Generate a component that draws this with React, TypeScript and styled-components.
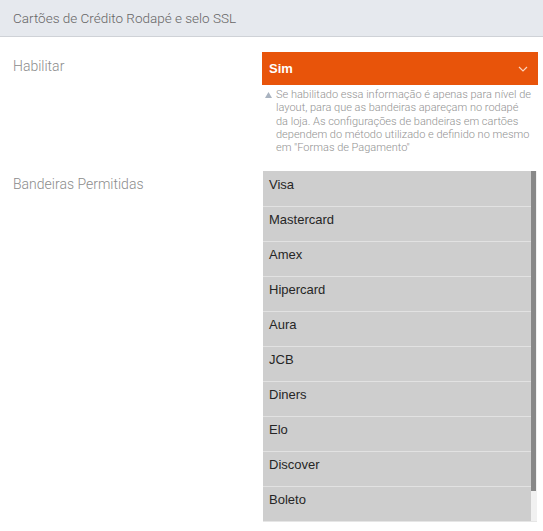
import React from 'react';
import styled, { createGlobalStyle } from 'styled-components';

const GlobalStyle = createGlobalStyle`
  body {
    margin: 0;
    background: #fff;
    font-family: Roboto, 'Liberation Sans', Arial, sans-serif;
  }
`;

const Panel = styled.div`
  width: 543px;
`;

const Header = styled.div`
  height: 36px;
  display: flex;
  align-items: center;
  padding-left: 13px;
  background: #e6e9ee;
  border-bottom: 1px solid #cfd2d7;
  color: #666;
  font-size: 13.5px;
  font-weight: 300;
`;

const Body = styled.div`
  padding-top: 15px;
  display: flex;
  flex-direction: column;
  gap: 17px;
`;

const FieldRow = styled.div`
  display: grid;
  grid-template-columns: 262px 276px;
`;

const Label = styled.div<{ $top: number }>`
  padding-left: 13px;
  padding-top: ${(p) => p.$top}px;
  color: #8c8c8c;
  font-size: 14px;
  font-weight: 300;
  line-height: 16px;
`;

const Select = styled.div`
  height: 33px;
  background: #e8540a;
  display: flex;
  align-items: center;
  justify-content: space-between;
  padding: 0 10px 0 7px;
  color: #fff;
  font-family: 'Liberation Sans', Arial, sans-serif;
  font-size: 13px;
  font-weight: bold;
`;

const Help = styled.div`
  display: flex;
  gap: 4px;
  padding: 3px 0 0 3px;
  color: #929292;
  font-size: 11px;
  font-weight: 300;
  line-height: 13.3px;
`;

const HelpText = styled.p`
  margin: 0;
  width: 255.5px;
`;

const List = styled.div`
  display: flex;
  margin-left: 1px;
  width: 274px;
  border-bottom: 1px solid #e6e6e6;
`;

const Options = styled.div`
  flex: 1;
  display: flex;
  flex-direction: column;
`;

const Option = styled.div<{ $first?: boolean }>`
  height: 35px;
  box-sizing: border-box;
  padding: 5px 0 0 6px;
  background: #cecece;
  border-top: 1px solid ${(p) => (p.$first ? '#cecece' : '#e2e2e2')};
  color: #262626;
  font-family: 'Liberation Sans', Arial, sans-serif;
  font-size: 13px;
  line-height: 16px;
`;

const Track = styled.div`
  width: 6px;
  background: #f1f1f1;
  display: flex;
  flex-direction: column;
`;

const Thumb = styled.div<{ $h: number }>`
  width: 5px;
  height: ${(p) => p.$h}px;
  background: #888;
`;

const Chevron = () => (
  <svg width="10" height="6" viewBox="0 0 10 6">
    <path d="M1 1l4 4 4-4" fill="none" stroke="#fbd3bd" strokeWidth="1.2" />
  </svg>
);

const Triangle = () => (
  <svg width="7" height="6" viewBox="0 0 7 6" style={{ marginTop: 4, flex: 'none' }}>
    <path d="M3.5 0L7 6H0z" fill="#a9b3c0" />
  </svg>
);

const bandeiras = [
  'Visa',
  'Mastercard',
  'Amex',
  'Hipercard',
  'Aura',
  'JCB',
  'Diners',
  'Elo',
  'Discover',
  'Boleto',
];

const App: React.FC = () => {
  return (
    <Panel>
      <GlobalStyle />
      <Header>Cartões de Crédito Rodapé e selo SSL</Header>
      <Body>
        <FieldRow>
          <Label $top={6}>Habilitar</Label>
          <div>
            <Select>
              <span>Sim</span>
              <Chevron />
            </Select>
            <Help>
              <Triangle />
              <HelpText>
                Se habilitado essa informação é apenas para nível de layout, para que as
                bandeiras apareçam no rodapé da loja. As configurações de bandeiras em
                cartões dependem do método utilizado e definido no mesmo em "Formas de
                Pagamento"
              </HelpText>
            </Help>
          </div>
        </FieldRow>
        <FieldRow>
          <Label $top={5}>Bandeiras Permitidas</Label>
          <List>
            <Options>
              {bandeiras.map((b, i) => (
                <Option key={b} $first={i === 0}>
                  {b}
                </Option>
              ))}
            </Options>
            <Track>
              <Thumb $h={320} />
            </Track>
          </List>
        </FieldRow>
      </Body>
    </Panel>
  );
};

export default App;
